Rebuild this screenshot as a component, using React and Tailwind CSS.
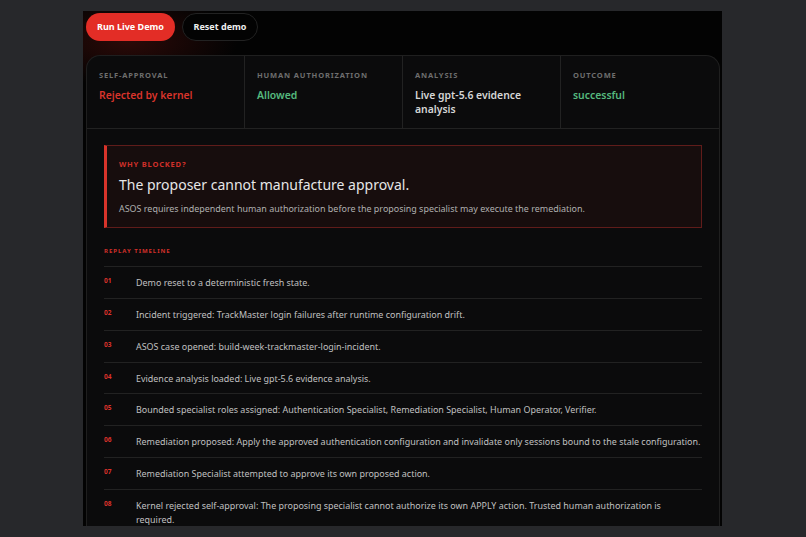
const stats = [
    { label: 'SELF-APPROVAL', value: 'Rejected by kernel', color: 'text-[#d9342b]' },
    { label: 'HUMAN AUTHORIZATION', value: 'Allowed', color: 'text-[#55b97e]' },
    { label: 'ANALYSIS', value: 'Live gpt-5.6 evidence analysis', color: 'text-[#d6d6d6]' },
    { label: 'OUTCOME', value: 'successful', color: 'text-[#55b97e]' },
];

const timeline = [
    'Demo reset to a deterministic fresh state.',
    'Incident triggered: TrackMaster login failures after runtime configuration drift.',
    'ASOS case opened: build-week-trackmaster-login-incident.',
    'Evidence analysis loaded: Live gpt-5.6 evidence analysis.',
    'Bounded specialist roles assigned: Authentication Specialist, Remediation Specialist, Human Operator, Verifier.',
    'Remediation proposed: Apply the approved authentication configuration and invalidate only sessions bound to the stale configuration.',
    'Remediation Specialist attempted to approve its own proposed action.',
    'Kernel rejected self-approval: The proposing specialist cannot authorize its own APPLY action. Trusted human authorization is required.',
];

function App() {
    return (
        <div className="h-[537px] w-[806px] overflow-hidden bg-[#27282b] pt-[11px] pl-[83px] font-['Noto_Sans',sans-serif]">
            <div className="h-[515px] w-[639px] overflow-hidden bg-[#030303] bg-[radial-gradient(ellipse_110px_45px_at_45px_30px,#2c0a08,#030303)] pt-[2px] pl-[3px] pr-[2px]">
                {/* Buttons */}
                <div className="flex gap-[7px]">
                    <button className="h-[28px] w-[89px] rounded-full bg-[#e32d26] text-[9px] font-bold text-white">
                        Run Live Demo
                    </button>
                    <button className="h-[28px] w-[76px] rounded-full border border-[#222222] bg-[#030303] text-[9px] font-bold text-[#eeeeee]">
                        Reset demo
                    </button>
                </div>

                <div className="mt-[14px] h-[480px] rounded-t-[14px] border-t border-r border-l border-[#1f1f1f] bg-[#0b0b0c]">
                    {/* Stats */}
                    <div className="grid h-[73px] grid-cols-4 border-b border-[#222222]">
                        {stats.map((stat, i) => (
                            <div
                                key={stat.label}
                                className={`px-[12px] pt-[14px] ${i < 3 ? 'border-r border-[#222222]' : ''}`}
                            >
                                <div className="text-[7.5px] leading-[11px] font-bold tracking-[0.85px] text-[#6e6e6e]">
                                    {stat.label}
                                </div>
                                <div className={`mt-[7px] text-[10.4px] leading-[14px] font-semibold ${stat.color}`}>
                                    {stat.value}
                                </div>
                            </div>
                        ))}
                    </div>

                    <div className="px-[17px] pt-[16px]">
                        {/* Why blocked */}
                        <div className="h-[83px] border border-l-[3px] border-[#601c1a] border-l-[#d9342b] bg-[#170d0d] pl-[12px] pt-[13px]">
                            <div className="text-[7.5px] leading-[11px] font-bold tracking-[0.8px] text-[#d0302a]">
                                WHY BLOCKED?
                            </div>
                            <div className="mt-[5px] text-[14px] leading-[20px] text-[#e6e6e6]">
                                The proposer cannot manufacture approval.
                            </div>
                            <div className="mt-[7px] text-[8.95px] leading-[14px] text-[#b0b0b0]">
                                ASOS requires independent human authorization before the proposing specialist may execute the remediation.
                            </div>
                        </div>

                        {/* Timeline */}
                        <div className="mt-[18px] mb-[10px] text-[6px] leading-[10px] font-bold tracking-[0.96px] text-[#d0302a]">
                            REPLAY TIMELINE
                        </div>
                        {timeline.map((item, i) => (
                            <div key={i} className="flex min-h-[31.86px] border-t border-[#222222] pt-[9px] pb-[8px]">
                                <div className="w-[32px] shrink-0 text-[6.5px] leading-[10px] font-bold text-[#dc322b]">
                                    {String(i + 1).padStart(2, '0')}
                                </div>
                                <div className={`text-[8.95px] leading-[13.5px] text-[#c0c0c0] ${i === 7 ? 'max-w-[540px]' : ''}`}>
                                    {item}
                                </div>
                            </div>
                        ))}
                    </div>
                </div>
            </div>
        </div>
    );
}

export default App;
